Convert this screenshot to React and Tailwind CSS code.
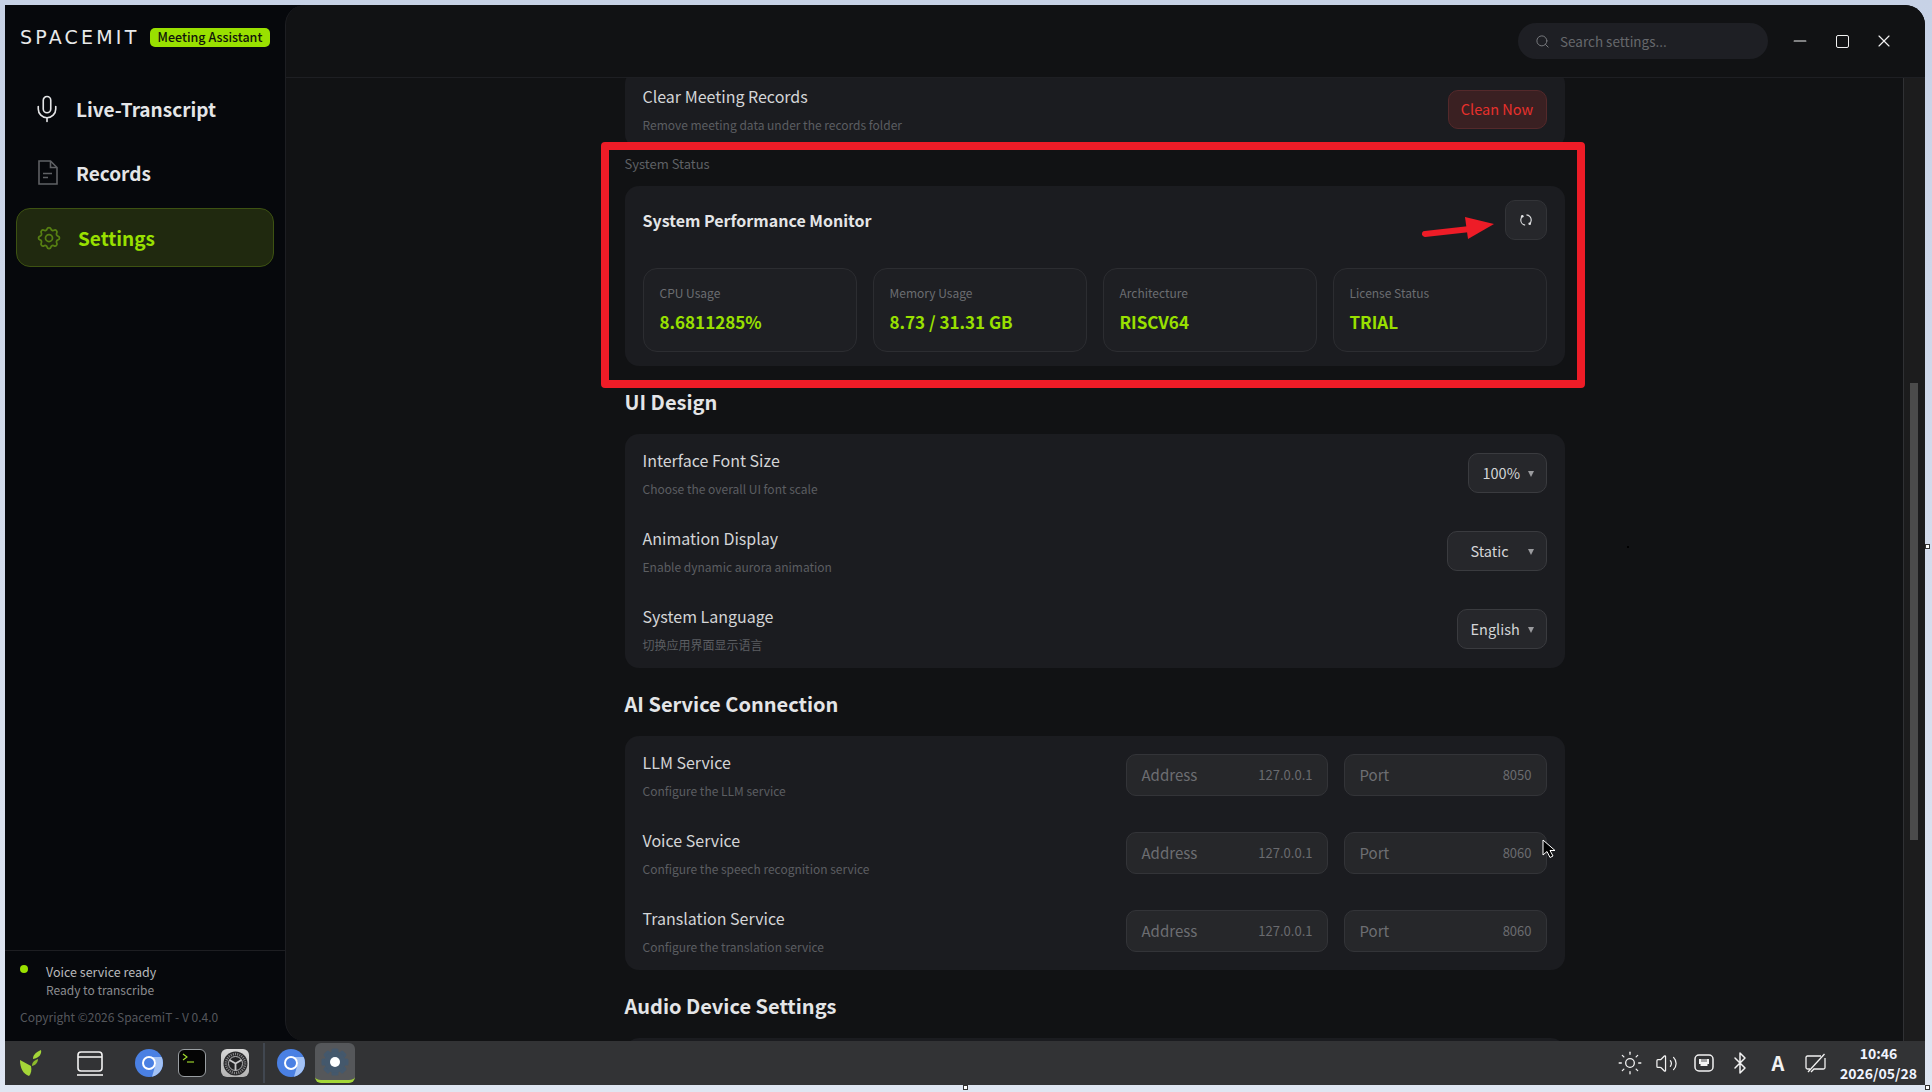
import React from "react";
import { Mic, Search, Minus, X, Sun, Volume2, Bluetooth } from "lucide-react";
import { TbSettings } from "react-icons/tb";

const FONT = "[font-family:'Noto_Sans_CJK_SC','Noto_Sans',sans-serif]";

const RecordsIcon = () => (
  <svg width="20" height="25" viewBox="0 0 20 25" fill="none" stroke="#5f6165" strokeWidth="1.6">
    <path d="M1 1h11.5L19 7.5V24H1z" />
    <path d="M12.5 1v6.5H19" />
    <path d="M5 13.5h9M5 17.5h5" />
  </svg>
);

const NavItem = ({ icon, label, active }) => (
  <div
    className={`flex items-center h-[59px] pl-[21px] rounded-[14px] border ${
      active ? "mt-[1px] bg-[#20290f] border-[#3d5212] text-[#99e000]" : "border-transparent text-[#e4e5e7]"
    }`}
  >
    <span className={`${active ? "w-[40px]" : "w-[38px]"} flex items-center`}>{icon}</span>
    <span className="text-[19px] font-semibold leading-none">{label}</span>
  </div>
);

const Sidebar = () => (
  <aside className="w-[280px] h-full bg-[#06080c] flex flex-col shrink-0">
    <div className="flex items-center h-[28px] mt-[18px] pl-[15px]">
      <span className="w-[130px] text-[19px] leading-none tracking-[3.2px] text-[#e8e9ea] [font-family:'DejaVu_Sans',sans-serif]">
        SPACEMIT
      </span>
      <span className="h-[19px] w-[120px] flex items-center justify-center rounded-[5px] bg-[#99e000] text-[#10140a] text-[12.5px] font-medium leading-none">
        Meeting Assistant
      </span>
    </div>
    <nav className="mt-[28px] mx-[11px] flex flex-col gap-[5px]">
      <NavItem icon={<Mic size={30} color="#e4e5e7" strokeWidth={1.3} className="-ml-[6px]" />} label="Live-Transcript" />
      <NavItem icon={<RecordsIcon />} label="Records" />
      <NavItem icon={<TbSettings size={28} color="#567f12" strokeWidth={1.5} className="-ml-[3px]" />} label="Settings" active />
    </nav>
    <div className="mt-auto border-t border-[#1d1e22] h-[91px] pl-[15px] relative">
      <span className="absolute left-[15px] top-[14px] w-[8px] h-[8px] rounded-full bg-[#99e000]" />
      <div className="pl-[26px] pt-[12px] text-[12.5px] leading-[18px] text-[#b9babd]">Voice service ready</div>
      <div className="pl-[26px] text-[12px] leading-[18px] text-[#8b8c90]">Ready to transcribe</div>
      <div className="mt-[9px] text-[12px] leading-[18px] text-[#55575c]">Copyright ©2026 SpacemiT - V 0.4.0</div>
    </div>
  </aside>
);

const Header = () => (
  <header className="h-[73px] shrink-0 border-b border-[#1e1f23] flex items-center justify-end pr-[31px]">
    <div className="w-[250px] h-[36px] rounded-full bg-[#1e1f24] flex items-center pl-[17px] gap-[10px]">
      <Search size={15} color="#77797d" strokeWidth={1.6} />
      <span className="text-[13.5px] text-[#66686c]">Search settings...</span>
    </div>
    <Minus size={20} color="#f0f0f0" strokeWidth={1.4} className="ml-[22px]" />
    <span className="ml-[26px] w-[13px] h-[13px] border-[1.5px] border-[#f0f0f0] rounded-[2px]" />
    <X size={20} color="#f0f0f0" strokeWidth={1.4} className="ml-[25px]" />
  </header>
);

const RowText = ({ title, desc }) => (
  <div className="flex flex-col">
    <span className="text-[16px] leading-[24px] text-[#d4d5d7]">{title}</span>
    <span className="mt-[8px] text-[12px] leading-[18px] text-[#5c5e62]">{desc}</span>
  </div>
);

const Row = ({ title, desc, children }) => (
  <div className="h-[78px] px-[18px] flex items-center justify-between">
    <RowText title={title} desc={desc} />
    <div className="flex items-center gap-[16px]">{children}</div>
  </div>
);

const Card = ({ children, className = "" }) => (
  <div className={`rounded-[14px] bg-[#1b1c20] ${className}`}>{children}</div>
);

const SectionTitle = ({ children }) => (
  <h2 className="mt-[22px] mb-[18px] h-[28px] flex items-center text-[20px] font-semibold text-[#e4e5e7]">
    {children}
  </h2>
);

const Select = ({ value, width, pad }) => (
  <div className={`${width} ${pad} h-[40px] rounded-[10px] bg-[#26272b] border border-[#3a3b3f] flex items-center justify-between pr-[12px]`}>
    <span className="text-[14.5px] text-[#d4d5d7]">{value}</span>
    <span className="w-0 h-0 border-x-[3.5px] border-x-transparent border-t-[6px] border-t-[#9a9b9e] mt-[2px]" />
  </div>
);

const Input = ({ label, value, width }) => (
  <div className={`${width} h-[42px] rounded-[10px] bg-[#26272a] border border-[#333438] flex items-center justify-between pl-[15px] pr-[14px]`}>
    <span className="text-[15px] text-[#6d6e72]">{label}</span>
    <span className="text-[13px] text-[#6a6b6f]">{value}</span>
  </div>
);

const ServiceRow = ({ title, desc, port }) => (
  <Row title={title} desc={desc}>
    <Input label="Address" value="127.0.0.1" width="w-[202px]" />
    <Input label="Port" value={port} width="w-[203px]" />
  </Row>
);

const Metric = ({ label, value }) => (
  <div className="h-[84px] rounded-[14px] border border-[#2c2d31] bg-[#1e1f23] pl-[16px] pt-[14px]">
    <div className="text-[12px] leading-[20px] text-[#6b6d71]">{label}</div>
    <div className="mt-[6px] text-[17px] leading-[26px] font-semibold text-[#99e000]">{value}</div>
  </div>
);

const RefreshIcon = () => (
  <svg width="14" height="14" viewBox="0 0 14 14" fill="none">
    <circle cx="7" cy="7" r="5.2" stroke="#d8d9db" strokeWidth="1.2" strokeDasharray="11.8 4.54" transform="rotate(-85 7 7)" />
    <circle cx="3.3" cy="3.3" r="1.3" fill="#e4e5e7" />
    <circle cx="10.7" cy="10.7" r="1.3" fill="#e4e5e7" />
  </svg>
);

const Content = () => (
  <div className="w-[940px] mx-auto -mt-[8px]">
    <Card>
      <Row title="Clear Meeting Records" desc="Remove meeting data under the records folder">
        <div className="w-[99px] h-[39px] rounded-[10px] bg-[#3a2022] border border-[#54292b] flex items-center justify-center text-[14.5px] text-[#e8302c]">
          Clean Now
        </div>
      </Row>
    </Card>

    <div className="mt-[6px] mb-[12px] h-[20px] flex items-center text-[13px] text-[#5f6165]">System Status</div>
    <Card className="px-[18px] pt-[14px] pb-[14px]">
      <div className="flex items-center justify-between h-[40px]">
        <span className="text-[16px] font-semibold text-[#e4e5e7]">System Performance Monitor</span>
        <div className="w-[42px] h-[40px] rounded-[10px] bg-[#26272b] border border-[#333438] flex items-center justify-center">
          <RefreshIcon />
        </div>
      </div>
      <div className="mt-[28px] grid grid-cols-4 gap-[16px]">
        <Metric label="CPU Usage" value="8.6811285%" />
        <Metric label="Memory Usage" value="8.73 / 31.31 GB" />
        <Metric label="Architecture" value="RISCV64" />
        <Metric label="License Status" value="TRIAL" />
      </div>
    </Card>

    <SectionTitle>UI Design</SectionTitle>
    <Card>
      <Row title="Interface Font Size" desc="Choose the overall UI font scale">
        <Select value="100%" width="w-[79px]" pad="pl-[14px]" />
      </Row>
      <Row title="Animation Display" desc="Enable dynamic aurora animation">
        <Select value="Static" width="w-[100px]" pad="pl-[23px]" />
      </Row>
      <Row title="System Language" desc="切换应用界面显示语言">
        <Select value="English" width="w-[90px]" pad="pl-[13px]" />
      </Row>
    </Card>

    <SectionTitle>AI Service Connection</SectionTitle>
    <Card>
      <ServiceRow title="LLM Service" desc="Configure the LLM service" port="8050" />
      <ServiceRow title="Voice Service" desc="Configure the speech recognition service" port="8060" />
      <ServiceRow title="Translation Service" desc="Configure the translation service" port="8060" />
    </Card>

    <SectionTitle>Audio Device Settings</SectionTitle>
    <Card className="h-[60px]" />
  </div>
);

const Chrome = () => (
  <svg width="28" height="28" viewBox="0 0 28 28">
    <circle cx="14" cy="14" r="14" fill="#4a80e3" />
    <path d="M14 8h12.6A14 14 0 0 1 17 27.7L21 14a7 7 0 0 0-7-6z" fill="#a3c2f5" />
    <circle cx="14" cy="14" r="7" fill="#fff" />
    <circle cx="14" cy="14" r="5" fill="#4a80e3" />
  </svg>
);

const Leaf = () => (
  <svg width="22" height="26" viewBox="0 0 22 26" fill="#a4d638">
    <path d="M0 10L11 16C12 20 11 24 9 26C3 24 0 18 0 10z" />
    <path d="M12 16c0-3 1-5 6-7c0 3-2 6-6 7z" fill="#8dbb2c" />
    <path d="M13 9c0-4 2-6 8-9c1 4-2 8-8 9z" />
  </svg>
);

const DesktopIcon = () => (
  <svg width="26" height="25" viewBox="0 0 26 25" fill="none" stroke="#f2f2f2" strokeWidth="1.6">
    <rect x="1" y="1" width="24" height="19" rx="3" />
    <path d="M1 6h24" />
    <path d="M0 24h26" />
  </svg>
);

const Terminal = () => (
  <div className="w-[28px] h-[28px] rounded-[6px] bg-[#050505] border-[1.5px] border-[#9a9fa3] relative">
    <svg width="25" height="25" viewBox="0 0 25 25" fill="none" stroke="#a6e22e" strokeWidth="1.1" className="absolute left-0 top-0">
      <path d="M4 4l4 3-4 3" />
      <path d="M8 12h7" />
    </svg>
  </div>
);

const SysSettings = () => (
  <div className="w-[28px] h-[28px] rounded-[6px] bg-gradient-to-b from-[#d8d8d8] to-[#b4b4b4] flex items-center justify-center">
    <svg width="25" height="25" viewBox="0 0 25 25" fill="none">
      <circle cx="12.5" cy="12.5" r="12" fill="#2a2a2c" />
      <circle cx="12.5" cy="12.5" r="9.5" stroke="#8a8a8c" strokeWidth="2.5" strokeDasharray="1 1.2" />
      <circle cx="12.5" cy="12.5" r="7" fill="#232325" stroke="#b5b5b7" strokeWidth="1" />
      <path d="M12.5 12.5L6.5 9M12.5 12.5L18.5 9M12.5 12.5V19.5" stroke="#c8c8ca" strokeWidth="1.8" />
    </svg>
  </div>
);

const AppGear = () => (
  <svg width="28" height="28" viewBox="0 0 28 28">
    {[0, 45, 90, 135].map((r) => (
      <rect key={r} x="10.5" y="0.5" width="7" height="27" rx="1.5" fill="#44586c" transform={`rotate(${r} 14 14)`} />
    ))}
    <circle cx="14" cy="14" r="10.5" fill="#44586c" />
    <circle cx="14" cy="14" r="5" fill="#fff" />
  </svg>
);

const NetBox = () => (
  <svg width="20" height="18" viewBox="0 0 20 18" fill="none">
    <rect x="1" y="1" width="18" height="16" rx="4" stroke="#f2f2f2" strokeWidth="1.5" />
    <path d="M5 5h10v5h-1.5v2h-7v-2H5z" fill="#f2f2f2" />
    <path d="M8 5v3M10 5v3M12 5v3" stroke="#323335" strokeWidth="0.8" />
  </svg>
);

const NoScreen = () => (
  <svg width="21" height="21" viewBox="0 0 21 21" fill="none" stroke="#f2f2f2" strokeWidth="1.3">
    <path d="M16 3H2.5a1.5 1.5 0 0 0-1.5 1.5v10A1.5 1.5 0 0 0 2.500 16H5" />
    <path d="M20 5v9.5a1.5 1.5 0 0 1-1.5 1.5H9l-3 3" />
    <path d="M3 19L19.5 1" />
  </svg>
);

const Taskbar = () => (
  <div className="h-[44px] shrink-0 bg-[#323335] flex items-center relative">
    <span className="ml-[15px]"><Leaf /></span>
    <span className="ml-[35px]"><DesktopIcon /></span>
    <span className="ml-[32px]"><Chrome /></span>
    <span className="ml-[15px]"><Terminal /></span>
    <span className="ml-[15px]"><SysSettings /></span>
    <span className="ml-[14px] w-[2px] h-[40px] bg-[#414750]" />
    <span className="ml-[12px]"><Chrome /></span>
    <div className="ml-[10px] w-[40px] h-[40px] rounded-[6px] bg-[#55575a] border-b-[3px] border-[#a4d638] flex items-center justify-center">
      <AppGear />
    </div>
    <div className="ml-auto flex items-center text-[#f2f2f2]">
      <Sun size={26} strokeWidth={1.2} />
      <span className="ml-[12px]"><Volume2 size={23} strokeWidth={1.3} /></span>
      <span className="ml-[16px]"><NetBox /></span>
      <span className="ml-[14px]"><Bluetooth size={24} strokeWidth={1.5} /></span>
      <span className="ml-[18px] w-[16px] text-center text-[20px] font-bold leading-none">A</span>
      <span className="ml-[19px]"><NoScreen /></span>
      <div className="ml-[14px] mr-[8px] w-[77px] text-center text-[14px] font-bold leading-[20px] text-[#f0f4ff]">
        <div>10:46</div>
        <div>2026/05/28</div>
      </div>
    </div>
  </div>
);

export default function App() {
  return (
    <div className={`relative w-[1932px] h-[1092px] overflow-hidden bg-gradient-to-b from-[#c7d2e6] to-[#dfe6f2] pt-[5px] pl-[5px] pr-[7px] pb-[7px] flex flex-col ${FONT}`}>
      <div className="flex-1 min-h-0 flex bg-[#06080c] rounded-tr-[20px] overflow-hidden">
        <Sidebar />
        <main className="flex-1 min-w-0 flex flex-col bg-[#111214] rounded-l-[20px] border-l border-[#1d1e22] overflow-hidden">
          <Header />
          <div className="flex-1 min-h-0 flex">
            <div className="flex-1 min-w-0 overflow-hidden">
              <Content />
            </div>
            <div className="w-[22px] shrink-0 border-l border-[#303134] bg-[#1c1c1d] pl-[6px]">
              <div className="mt-[305px] w-[8px] h-[457px] bg-[#4b4b4b]" />
            </div>
          </div>
        </main>
      </div>
      <Taskbar />

      {/* annotation drawn over the screenshot */}
      <div className="absolute left-[601px] top-[142px] w-[984px] h-[246px] rounded-[4px] border-[8px] border-[#ee1c27]" />
      <svg className="absolute left-[1420px] top-[214px]" width="78" height="30" viewBox="0 0 78 30">
        <path d="M5 20L50 15" stroke="#ee1c27" strokeWidth="6" strokeLinecap="round" />
        <path d="M45 3L74 10L48 25z" fill="#ee1c27" />
      </svg>

      {/* mouse cursor */}
      <svg className="absolute left-[1542px] top-[839px]" width="14" height="20" viewBox="0 0 14 20">
        <path d="M1 1v15l4-3.5 3 6 3-1.5-3-5.5h5z" fill="#000" stroke="#fff" strokeWidth="1" />
      </svg>

      {/* window resize handles */}
      <span className="absolute left-[1925px] top-[544px] w-[5px] h-[5px] bg-white border border-[#333]" />
      <span className="absolute left-[963px] top-[1085px] w-[5px] h-[5px] bg-white border border-[#333]" />
      <span className="absolute left-[1925px] top-[1085px] w-[5px] h-[5px] bg-white border border-[#333]" />
      <span className="absolute left-[1627px] top-[546px] w-[2px] h-[2px] bg-black" />
    </div>
  );
}
